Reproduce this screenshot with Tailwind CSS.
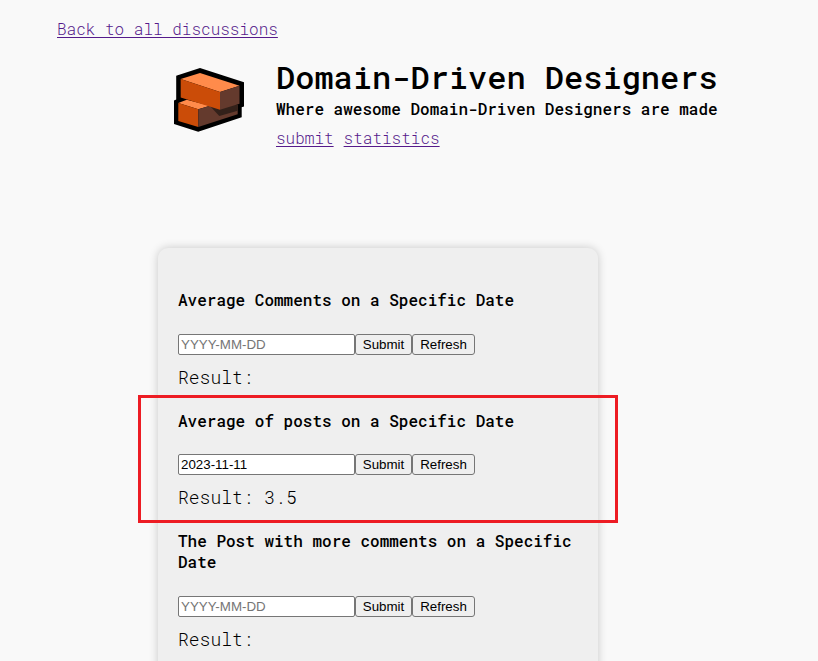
<!DOCTYPE html>
<html lang="en">
<head>
<meta charset="utf-8">
<title>Domain-Driven Designers</title>
<script src="https://cdn.jsdelivr.net/npm/@tailwindcss/browser@4"></script>
</head>
<body class="relative h-screen overflow-hidden bg-[#f9f9f9] text-black font-['Roboto_Mono','DejaVu_Sans_Mono',monospace] text-[16px] leading-[21px] font-[340]">
  <nav class="pl-[57px] pt-[18px]">
    <a href="#" class="block w-fit text-[#551a8b] underline decoration-1 underline-offset-2">Back to all discussions</a>
  </nav>
  <header class="flex pl-[172px] pt-[17px]">
    <svg class="mt-[10px] mr-[30px] h-[70px] w-[74px] shrink-0" viewBox="0 0 74 70">
      <path d="M4.200 9.700 28 2 72 16.300V40.500L69.700 41.300V51.300L26.200 65.700 2 58V34.500L4.200 33.500Z" fill="#000"/>
      <path d="M6.300 37 14.700 33.700 38 39.700 26.300 43.300Z" fill="#ff8b4b"/>
      <path d="M6.300 37 26.300 43.300V61L6.300 55Z" fill="#cb4c08"/>
      <path d="M26.300 43.300 38 39.700 65.700 38.700V48.300L26.300 61Z" fill="#643a2d"/>
      <path d="M38 40 65.700 38.700V44.700L47.300 50Z" fill="#33211a"/>
      <path d="M8.700 13 28 7 67.500 19.700 48 26Z" fill="#ff8b4b"/>
      <path d="M8.700 13 48 26V43.700L8.700 31.500Z" fill="#cb4c08"/>
      <path d="M48 26 67.500 19.700V37.800L48 43.700Z" fill="#643a2d"/>
    </svg>
    <div>
      <h1 class="text-[32px] leading-[42px] font-[550]">Domain-Driven Designers</h1>
      <p class="font-[540]">Where awesome Domain-Driven Designers are made</p>
      <div class="mt-2 flex gap-[10px] text-[#551a8b]">
        <a href="#" class="underline decoration-1 underline-offset-2">submit</a>
        <a href="#" class="underline decoration-1 underline-offset-2">statistics</a>
      </div>
    </div>
  </header>
  <main class="ml-[158px] mt-[100px] h-[430px] w-[440px] rounded-[10px] bg-[#efefef] px-5 pt-[41px] shadow-[0_0_10px_rgba(0,0,0,0.2)]">
    <section class="mb-[21px]">
      <h2 class="font-[540]">Average Comments on a Specific Date</h2>
      <form class="mt-6 flex h-[21px] font-['Liberation_Sans',Arial,sans-serif] text-[13.333px] leading-[15px] font-normal">
        <input class="w-[177px] rounded-[2px] border border-[#767676] bg-white px-[2px] placeholder:text-[#757575]" placeholder="YYYY-MM-DD">
        <button type="button" class="w-[57px] rounded-[3px] border border-[#767676] bg-[#efefef]">Submit</button>
        <button type="button" class="w-[63px] rounded-[3px] border border-[#767676] bg-[#efefef]">Refresh</button>
      </form>
      <p class="mt-[10px] text-[18px] leading-6">Result:</p>
    </section>
    <section class="mb-[21px]">
      <h2 class="font-[540]">Average of posts on a Specific Date</h2>
      <form class="mt-[23px] flex h-[21px] font-['Liberation_Sans',Arial,sans-serif] text-[13.333px] leading-[15px] font-normal">
        <input class="w-[177px] rounded-[2px] border border-[#767676] bg-white px-[2px] placeholder:text-[#757575]" placeholder="YYYY-MM-DD" value="2023-11-11">
        <button type="button" class="w-[57px] rounded-[3px] border border-[#767676] bg-[#efefef]">Submit</button>
        <button type="button" class="w-[63px] rounded-[3px] border border-[#767676] bg-[#efefef]">Refresh</button>
      </form>
      <p class="mt-[10px] text-[18px] leading-6">Result: 3.5</p>
    </section>
    <section>
      <h2 class="font-[540]">The Post with more comments on a Specific Date</h2>
      <form class="mt-6 flex h-[21px] font-['Liberation_Sans',Arial,sans-serif] text-[13.333px] leading-[15px] font-normal">
        <input class="w-[177px] rounded-[2px] border border-[#767676] bg-white px-[2px] placeholder:text-[#757575]" placeholder="YYYY-MM-DD">
        <button type="button" class="w-[57px] rounded-[3px] border border-[#767676] bg-[#efefef]">Submit</button>
        <button type="button" class="w-[63px] rounded-[3px] border border-[#767676] bg-[#efefef]">Refresh</button>
      </form>
      <p class="mt-[10px] text-[18px] leading-6">Result:</p>
    </section>
  </main>
  <div class="pointer-events-none absolute left-[138px] top-[395px] h-[128px] w-[480px] border-3 border-[#ed1c24]"></div>
</body>
</html>
